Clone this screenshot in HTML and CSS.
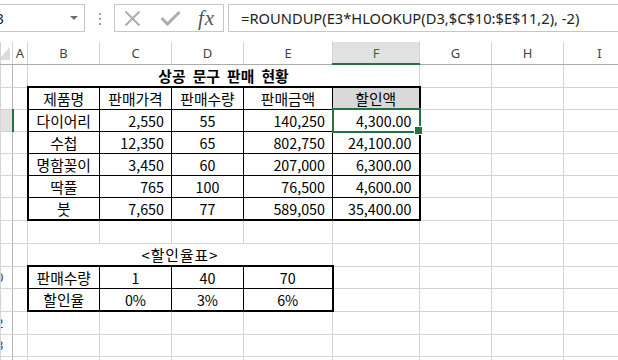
FILE: index.html
```html
<!DOCTYPE html>
<html lang="ko">
<head>
    <meta charset="UTF-8">
    <title>상공 문구 판매 현황</title>
    <link rel="stylesheet" href="styles.css">
</head>
<body>
    <div class="toolbar">
        <div class="namebox">
            <span>F3</span>
            <span class="caret"></span>
        </div>
        <svg class="grip" width="2" height="12" viewBox="0 0 2 12">
            <rect x="0" y="0" width="2" height="2"/>
            <rect x="0" y="5" width="2" height="2"/>
            <rect x="0" y="10" width="2" height="2"/>
        </svg>
        <div class="fxbox">
            <svg class="icon-x" width="17" height="17" viewBox="0 0 17 17">
                <path d="M1.5 1.5 L15.5 15.5 M15.5 1.5 L1.5 15.5"/>
            </svg>
            <svg class="icon-ok" width="21" height="16" viewBox="0 0 21 16">
                <path d="M1.5 8 L7.5 14 L19.5 2"/>
            </svg>
            <span class="fx">fx</span>
        </div>
        <div class="formula">=ROUNDUP(E3*HLOOKUP(D3,$C$10:$E$11,2), -2)</div>
    </div>

    <table class="sheet">
        <colgroup>
            <col class="w-rh">
            <col class="w-a">
            <col class="w-std">
            <col class="w-std">
            <col class="w-std">
            <col class="w-e">
            <col class="w-f">
            <col class="w-std">
            <col class="w-std">
            <col class="w-std">
        </colgroup>
        <thead>
            <tr>
                <th class="corner">
                    <svg width="11" height="21" viewBox="0 0 11 21"><polygon points="9,5 9,18 -3,18"/></svg>
                </th>
                <th>A</th><th>B</th><th>C</th><th>D</th><th>E</th>
                <th class="on">F</th><th>G</th><th>H</th><th>I</th>
            </tr>
        </thead>
        <tbody>
            <tr class="tall">
                <td class="rh"><span>1</span></td><td></td>
                <td class="title" colspan="5">상공 문구 판매 현황</td>
                <td></td><td></td><td></td>
            </tr>
            <tr>
                <td class="rh"><span>2</span></td><td></td>
                <td class="t top lft">제품명</td>
                <td class="t top">판매가격</td>
                <td class="t top">판매수량</td>
                <td class="t top">판매금액</td>
                <td class="t top rgt fill">할인액</td>
                <td></td><td></td><td></td>
            </tr>
            <tr>
                <td class="rh on"><span>3</span></td><td></td>
                <td class="t lft">다이어리</td>
                <td class="t num">2,550</td>
                <td class="t fig">55</td>
                <td class="t num">140,250</td>
                <td class="t num rgt active">4,300.00<div class="sel"></div></td>
                <td></td><td></td><td></td>
            </tr>
            <tr>
                <td class="rh"><span>4</span></td><td></td>
                <td class="t lft">수첩</td>
                <td class="t num">12,350</td>
                <td class="t fig">65</td>
                <td class="t num">802,750</td>
                <td class="t num rgt">24,100.00</td>
                <td></td><td></td><td></td>
            </tr>
            <tr>
                <td class="rh"><span>5</span></td><td></td>
                <td class="t lft">명함꽂이</td>
                <td class="t num">3,450</td>
                <td class="t fig">60</td>
                <td class="t num">207,000</td>
                <td class="t num rgt">6,300.00</td>
                <td></td><td></td><td></td>
            </tr>
            <tr>
                <td class="rh"><span>6</span></td><td></td>
                <td class="t lft">딱풀</td>
                <td class="t num">765</td>
                <td class="t fig">100</td>
                <td class="t num">76,500</td>
                <td class="t num rgt">4,600.00</td>
                <td></td><td></td><td></td>
            </tr>
            <tr>
                <td class="rh"><span>7</span></td><td></td>
                <td class="t lft bot">붓</td>
                <td class="t num bot">7,650</td>
                <td class="t fig bot">77</td>
                <td class="t num bot">589,050</td>
                <td class="t num rgt bot">35,400.00</td>
                <td></td><td></td><td></td>
            </tr>
            <tr class="tall">
                <td class="rh"><span>8</span></td><td></td>
                <td></td><td></td><td></td><td></td><td></td>
                <td></td><td></td><td></td>
            </tr>
            <tr class="tall">
                <td class="rh"><span>9</span></td><td></td>
                <td class="caption" colspan="4">&lt;할인율표&gt;</td>
                <td></td><td></td><td></td><td></td>
            </tr>
            <tr>
                <td class="rh"><span>10</span></td><td></td>
                <td class="t top lft">판매수량</td>
                <td class="t fig top">1</td>
                <td class="t fig top">40</td>
                <td class="t fig top rgt">70</td>
                <td></td><td></td><td></td><td></td>
            </tr>
            <tr>
                <td class="rh"><span>11</span></td><td></td>
                <td class="t bot lft">할인율</td>
                <td class="t fig bot">0%</td>
                <td class="t fig bot">3%</td>
                <td class="t fig bot rgt">6%</td>
                <td></td><td></td><td></td><td></td>
            </tr>
            <tr class="tall">
                <td class="rh"><span>12</span></td><td></td>
                <td></td><td></td><td></td><td></td><td></td>
                <td></td><td></td><td></td>
            </tr>
            <tr>
                <td class="rh"><span>13</span></td><td></td>
                <td></td><td></td><td></td><td></td><td></td>
                <td></td><td></td><td></td>
            </tr>
            <tr>
                <td class="rh"><span>14</span></td><td></td>
                <td></td><td></td><td></td><td></td><td></td>
                <td></td><td></td><td></td>
            </tr>
        </tbody>
    </table>
</body>
</html>
```

FILE: styles.css
```css
* {
    box-sizing: border-box;
    margin: 0;
    padding: 0;
}

body {
    width: 618px;
    height: 360px;
    overflow: hidden;
    background-color: #fff;
    font-family: "Noto Sans CJK KR", sans-serif;
    color: #000;
}

/* formula bar */
.toolbar {
    display: flex;
    align-items: flex-start;
    height: 42px;
    padding-top: 4px;
}

.namebox {
    display: flex;
    align-items: center;
    justify-content: space-between;
    flex: none;
    width: 102px;
    height: 28px;
    margin-left: -17px;
    padding: 0 6px 0 4px;
    border: 1px solid #c6c6c6;
    font-family: "Noto Sans", sans-serif;
    font-size: 14.7px;
    color: #222;
}

.caret {
    width: 0;
    height: 0;
    border-left: 4px solid transparent;
    border-right: 4px solid transparent;
    border-top: 4px solid #6d6d6d;
}

.grip {
    flex: none;
    margin: 9px 13px 0 14px;
    fill: #a0a0a0;
}

.fxbox {
    display: flex;
    align-items: center;
    flex: none;
    width: 110px;
    height: 28px;
    padding-left: 9px;
    border: 1px solid #c6c6c6;
}

.fxbox svg {
    fill: none;
    stroke: #adadad;
}

.icon-x {
    stroke-width: 2;
}

.icon-ok {
    margin-left: 19px;
    stroke-width: 3;
}

.fx {
    margin-left: 17px;
    font-family: "Liberation Serif", serif;
    font-style: italic;
    font-size: 21px;
    letter-spacing: 1px;
    line-height: 1;
    color: #555;
}

.formula {
    flex: 1;
    height: 28px;
    margin-left: 4px;
    padding-left: 12px;
    border: 1px solid #c6c6c6;
    border-right: none;
    font-family: "Noto Sans", sans-serif;
    font-size: 14.7px;
    line-height: 26px;
    color: #222;
    white-space: nowrap;
}

/* worksheet */
.sheet {
    border-collapse: collapse;
    table-layout: fixed;
    width: 635px;
}

.w-rh { width: 12px; }
.w-a { width: 15px; }
.w-std { width: 72px; }
.w-e { width: 89px; }
.w-f { width: 87px; }

.sheet tr {
    height: 22px;
}

.sheet tr.tall {
    height: 23px;
}

.sheet th {
    height: 22px;
    padding: 0;
    border-top: none;
    border-left: 1px solid #d4d4d4;
    border-right: 1px solid #d4d4d4;
    border-bottom: 1px solid #ababab;
    background-color: #fff;
    font-family: "Noto Sans", sans-serif;
    font-size: 13px;
    font-weight: normal;
    color: #444;
}

.sheet th.on {
    background-color: #e1e1e1;
    border-bottom: 2px solid #217346;
    color: #217346;
}

.corner {
    text-align: left;
    vertical-align: top;
}

.corner svg {
    display: block;
    fill: #dcdcdc;
}

.sheet td {
    padding: 0;
    border: 1px solid #d4d4d4;
    font-size: 14.8px;
    text-align: center;
    vertical-align: middle;
    white-space: nowrap;
    overflow: hidden;
}

.sheet td.rh {
    border-right: 1px solid #b6b6b6;
    font-family: "Noto Sans", sans-serif;
    font-size: 13px;
    color: #444;
}

.rh span {
    display: block;
    width: 30px;
    margin-left: -20px;
    text-align: center;
}

.sheet td.rh.on {
    background-color: #e1e1e1;
    border-right: 2px solid #217346;
}

.title {
    font-weight: bold;
    word-spacing: 3px;
}

.caption {
    letter-spacing: 1px;
}

.sheet td.t {
    border: 1px solid #000;
}

.sheet td.top { border-top: 2px solid #000; }
.sheet td.bot { border-bottom: 2px solid #000; }
.sheet td.lft { border-left: 2px solid #000; }
.sheet td.rgt { border-right: 2px solid #000; }

.sheet td.num,
.sheet td.fig {
    font-size: 14.3px;
}

.sheet td.num {
    text-align: right;
    padding-right: 7px;
}

.fill {
    background-color: #d9d9d9;
}

/* selected cell */
.sheet td.active {
    position: relative;
    overflow: visible;
}

.sel {
    position: absolute;
    top: -2px;
    left: -1px;
    right: -2px;
    bottom: -2px;
    border: 2px solid #217346;
}

.sel::after {
    content: "";
    position: absolute;
    right: -4px;
    bottom: -4px;
    width: 7px;
    height: 7px;
    background-color: #217346;
    border: 1px solid #fff;
}
```
